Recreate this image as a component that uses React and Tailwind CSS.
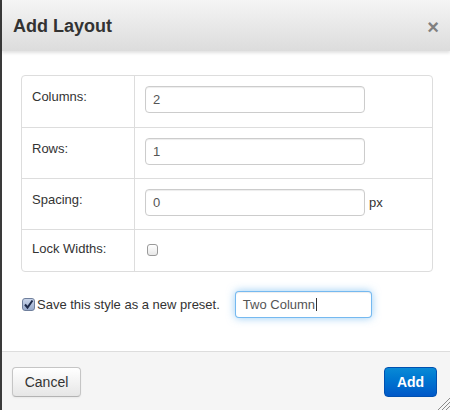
import React from "react";

const Field = ({ value, width = "w-[220px]" }) => (
  <div
    className={`${width} h-[27px] border border-[#ccc] rounded-[4px] bg-white shadow-[inset_0_1px_1px_rgba(0,0,0,0.075)] pl-[7px] pr-[6px] flex items-center text-[13px] text-[#555]`}
  >
    {value}
  </div>
);

const Row = ({ label, children, first, last }) => (
  <div
    className={`grid grid-cols-[113px_1fr] ${first ? "" : "border-t border-[#ddd]"} ${
      last ? "h-[42px]" : "h-[51px]"
    }`}
  >
    <div
      className={`border-r border-[#ddd] pl-[10px] text-[13px] leading-[20px] text-[#333] ${
        last ? "pt-[9px]" : "pt-[11px]"
      }`}
    >
      {label}
    </div>
    <div className={`flex items-start ${last ? "pt-[14px] pl-[12px]" : "pt-[10px] pl-[10px]"}`}>
      {children}
    </div>
  </div>
);

const App = () => {
  return (
    <div className="w-[450px] h-[410px] bg-[#3a3a3a] pl-[2px] font-['Liberation_Sans',Arial,sans-serif] overflow-hidden">
      <div className="relative h-full bg-white flex flex-col">
        {/* header */}
        <div className="relative z-10 h-[51px] shrink-0 bg-linear-to-b from-[#f5f5f5] to-[#dcdcdc] shadow-[0_2px_3px_rgba(0,0,0,0.12)] flex items-center justify-between pl-[11px] pr-[11px]">
          <h3 className="text-[18px] leading-[24px] font-bold text-[#333]">Add Layout</h3>
          <span className="text-[20px] leading-[20px] font-bold text-[#808080] pt-[3px]">×</span>
        </div>

        {/* body */}
        <div className="flex-1 px-[19px] pt-[24px]">
          <div className="w-[412px] border border-[#ddd] rounded-[4px]">
            <Row label="Columns:" first>
              <Field value="2" />
            </Row>
            <Row label="Rows:">
              <Field value="1" />
            </Row>
            <Row label="Spacing:">
              <Field value="0" />
              <span className="ml-[4px] mt-[4px] text-[13px] leading-[20px] text-[#333]">px</span>
            </Row>
            <Row label="Lock Widths:" last>
              <span className="w-[11px] h-[12px] rounded-[3px] border border-[#9a9a9a] bg-linear-to-b from-white to-[#e8e8e8]" />
            </Row>
          </div>

          <div className="flex items-center mt-[19px] ml-[1px]">
            <span className="w-[13px] h-[13px] rounded-[3px] border border-[#6f7f9c] bg-linear-to-b from-[#c9d5ea] to-[#98aacb] flex items-center justify-center">
              <svg width="11" height="11" viewBox="0 0 11 11">
                <path d="M2 5.5 L4.5 8.5 L9.5 1.5" fill="none" stroke="#1d2a4a" strokeWidth="2" />
              </svg>
            </span>
            <span className="ml-[2px] text-[13px] leading-[20px] text-[#333]">Save this style as a new preset.</span>
            <div className="ml-[15px] w-[137px] h-[27px] border border-[rgba(82,168,236,0.8)] rounded-[4px] bg-white shadow-[inset_0_1px_1px_rgba(0,0,0,0.075),0_0_8px_rgba(82,168,236,0.6)] pl-[7px] pr-[6px] flex items-center text-[13px] text-[#555]">
              Two Column
              <span className="w-px h-[13px] bg-[#333] ml-[1px]" />
            </div>
          </div>
        </div>

        {/* footer */}
        <div className="h-[59px] shrink-0 bg-[#f5f5f5] border-t border-[#ddd] flex items-start justify-between pt-[15px] pl-[10px] pr-[13px]">
          <button className="w-[69px] h-[30px] rounded-[4px] border border-[#c5c5c5] border-b-[#b3b3b3] bg-linear-to-b from-white to-[#e6e6e6] shadow-[inset_0_1px_0_rgba(255,255,255,0.2),0_1px_2px_rgba(0,0,0,0.05)] text-[14px] text-[#333]">
            Cancel
          </button>
          <button className="w-[53px] h-[30px] rounded-[4px] border border-[#0050b0] bg-linear-to-b from-[#0a8ad6] to-[#0058c8] text-[14px] font-bold text-white">
            Add
          </button>
        </div>

        {/* resize grip */}
        <svg className="absolute right-0 bottom-0" width="13" height="13" viewBox="0 0 13 13">
          <path d="M13 1 L1 13 M13 5 L5 13 M13 9 L9 13" stroke="#8a8a8a" strokeWidth="1" />
        </svg>
      </div>
    </div>
  );
};

export default App;
